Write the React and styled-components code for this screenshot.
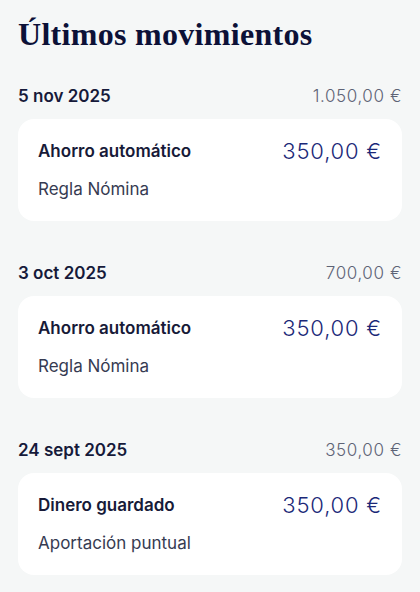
import React from "react";
import styled, { createGlobalStyle } from "styled-components";

const Global = createGlobalStyle`
  html, body { margin: 0; padding: 0; background: #f5f7f7; }
  body { font-family: Inter, "Noto Sans", sans-serif; -webkit-font-smoothing: antialiased; }
`;

const Page = styled.div`
  padding: 14px 18px 20px;
  display: flex;
  flex-direction: column;
`;

const Title = styled.h1`
  margin: 0 0 30px;
  font-family: "Liberation Serif", "DejaVu Serif", serif;
  font-weight: 700;
  font-size: 32px;
  line-height: 40px;
  letter-spacing: 0.3px;
  color: #0c1137;
`;

const Group = styled.section`
  display: flex;
  flex-direction: column;
  gap: 11px;
  margin-bottom: 40px;
`;

const DateRow = styled.div`
  display: flex;
  justify-content: space-between;
  align-items: center;
  height: 24px;
  line-height: 24px;
  font-size: 17px;
`;

const DateLabel = styled.span`
  font-weight: 600;
  color: #161a3a;
`;

const DayTotal = styled.span`
  font-weight: 300;
  color: #5e6376;
  letter-spacing: 0.6px;
`;

const Card = styled.div`
  background: #ffffff;
  border-radius: 16px;
  padding: 18px 20px 20px;
  display: flex;
  flex-direction: column;
  gap: 12px;
`;

const CardTop = styled.div`
  display: flex;
  justify-content: space-between;
  align-items: center;
  height: 28px;
`;

const Concept = styled.span`
  font-size: 17px;
  font-weight: 600;
  color: #171a38;
`;

const Amount = styled.span`
  font-size: 22px;
  line-height: 28px;
  font-weight: 300;
  color: #1b2878;
  letter-spacing: 0.8px;
`;

const Sub = styled.div`
  font-size: 17px;
  line-height: 24px;
  color: #363b52;
`;

const data = [
  { date: "5 nov 2025", total: "1.050,00 €", concept: "Ahorro automático", sub: "Regla Nómina", amount: "350,00 €" },
  { date: "3 oct 2025", total: "700,00 €", concept: "Ahorro automático", sub: "Regla Nómina", amount: "350,00 €" },
  { date: "24 sept 2025", total: "350,00 €", concept: "Dinero guardado", sub: "Aportación puntual", amount: "350,00 €" },
];

export default function App() {
  return (
    <>
      <Global />
      <Page>
        <Title>Últimos movimientos</Title>
        {data.map((d) => (
          <Group key={d.date}>
            <DateRow>
              <DateLabel>{d.date}</DateLabel>
              <DayTotal>{d.total}</DayTotal>
            </DateRow>
            <Card>
              <CardTop>
                <Concept>{d.concept}</Concept>
                <Amount>{d.amount}</Amount>
              </CardTop>
              <Sub>{d.sub}</Sub>
            </Card>
          </Group>
        ))}
      </Page>
    </>
  );
}
